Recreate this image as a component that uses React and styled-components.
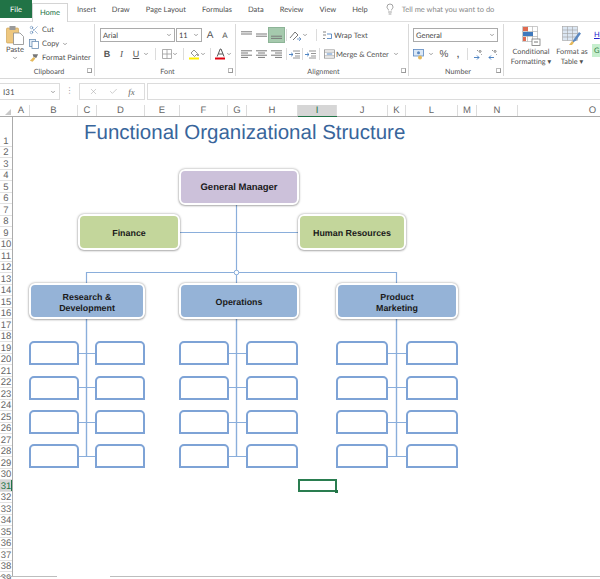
import React from 'react';
import styled, { createGlobalStyle } from 'styled-components';
import { ChevronDown, Lightbulb, X, Check, Scissors } from 'lucide-react';

const GlobalStyle = createGlobalStyle`
  html, body { margin: 0; padding: 0; background: #fff; }
  #root { width: 600px; height: 579px; overflow: hidden; }
  * { text-rendering: geometricPrecision; }
`;

const uiFont = `Lato, "Noto Sans", sans-serif`;
const sheetFont = `"Liberation Sans", Arial, sans-serif`;

const Window = styled.div`
  width: 600px;
  height: 579px;
  display: flex;
  flex-direction: column;
  overflow: hidden;
  font-family: ${uiFont};
  color: #505050;
  background: #fff;
`;

/* ---- tabs ---- */
const TabBar = styled.div`
  height: 21px;
  flex: none;
  display: flex;
  align-items: flex-end;
  font-size: 7.5px;
`;

const FileTab = styled.div`
  width: 32px;
  height: 18px;
  margin-bottom: 3px;
  background: #217346;
  color: #fff;
  display: flex;
  align-items: center;
  justify-content: center;
`;

const Tab = styled.div`
  height: 18px;
  margin-bottom: 3px;
  margin-left: ${p => p.$gap || 0}px;
  display: flex;
  align-items: center;
  white-space: nowrap;
`;

const ActiveTab = styled.div`
  width: 36px;
  height: 19px;
  margin-bottom: -1px;
  position: relative;
  box-sizing: border-box;
  display: flex;
  align-items: center;
  justify-content: center;
  padding-bottom: 2px;
  color: #217346;
  background: #fff;
  border: 1px solid #d4d4d4;
  border-bottom: none;
`;

const TellMe = styled.div`
  margin-left: 16px;
  margin-bottom: 3px;
  height: 18px;
  display: flex;
  align-items: center;
  gap: 6px;
  color: #8a8a8a;
`;

/* ---- ribbon ---- */
const Ribbon = styled.div`
  height: 58px;
  flex: none;
  display: flex;
  background: #fff;
  border-top: 1px solid #dedede;
  border-bottom: 1px solid #d8d8d8;
  box-sizing: border-box;
  font-size: 7.5px;
`;

const Group = styled.div`
  position: relative;
  width: ${p => p.$w}px;
  flex: none;
  box-sizing: border-box;
  padding: ${p => p.$pad || '0'};
  border-right: ${p => (p.$last ? 'none' : '1px solid #d9d9d9')};
  margin: 2px 0;
  display: flex;
  flex-direction: column;
`;

const GroupBody = styled.div`
  flex: 1;
  display: flex;
  gap: ${p => p.$gap || 0}px;
  min-height: 0;
`;

const GroupLabel = styled.div`
  height: 9px;
  line-height: 9px;
  text-align: center;
  font-size: 7.2px;
  color: #555;
`;

const Launcher = styled.span`
  position: absolute;
  right: 2px;
  bottom: 3px;
  width: 5px;
  height: 5px;
  border: 1px solid #9a9a9a;
  border-top-color: #bbb;
  border-left-color: #bbb;
  box-sizing: border-box;
`;

const PasteButton = styled.div`
  width: 22px;
  display: flex;
  flex-direction: column;
  align-items: center;
  line-height: 10px;
  padding-top: 2px;
`;

const ClipColumn = styled.div`
  display: flex;
  flex-direction: column;
  gap: 3px;
  margin-left: 1px;
`;

const ClipRow = styled.div`
  height: 11px;
  display: flex;
  align-items: center;
  gap: 3px;
  white-space: nowrap;
`;

const Stack = styled.div`
  display: flex;
  flex-direction: column;
  gap: ${p => p.$gap || 5}px;
  padding-top: ${p => p.$top || 4}px;
`;

const Line = styled.div`
  display: flex;
  align-items: center;
  height: 14px;
  gap: ${p => p.$gap || 0}px;
`;

const Select = styled.div`
  width: ${p => p.$w}px;
  height: 14px;
  box-sizing: border-box;
  border: 1px solid #ababab;
  display: flex;
  align-items: center;
  justify-content: space-between;
  padding: 0 2px;
  margin-right: ${p => p.$mr || 0}px;
  color: #444;
`;

const ToolGlyph = styled.span`
  width: ${p => p.$w || 14}px;
  flex: none;
  text-align: center;
  font-family: ${p => (p.$serif ? '"Liberation Serif", serif' : sheetFont)};
  font-size: ${p => p.$size || 9}px;
  font-weight: ${p => (p.$bold ? 700 : 400)};
  font-style: ${p => (p.$italic ? 'italic' : 'normal')};
  text-decoration: ${p => (p.$under ? 'underline' : 'none')};
  color: #555;
`;

const RibbonText = styled.span`
  margin-left: 1px;
  width: ${p => p.$w}px;
  flex: none;
  white-space: nowrap;
`;

const Divider = styled.span`
  width: 1px;
  height: 12px;
  background: #dcdcdc;
  margin: 0 ${p => p.$m || 3}px 0 ${p => p.$l || p.$m || 3}px;
  flex: none;
`;

const Caret = styled(ChevronDown).attrs({ size: 6, strokeWidth: 2.5 })`
  color: #666;
  flex: none;
`;

const AlignCell = styled.span`
  width: 15px;
  height: 14px;
  display: flex;
  align-items: center;
  justify-content: center;
  flex: none;
  background: ${p => (p.$on ? '#a5c9ad' : 'transparent')};
  outline: ${p => (p.$on ? '1px solid #8db497' : 'none')};
`;

const StyleButton = styled.div`
  width: ${p => p.$w}px;
  flex: none;
  display: flex;
  flex-direction: column;
  align-items: center;
  text-align: center;
  line-height: 9.5px;
  white-space: nowrap;
  font-size: 7.3px;
`;

const StyleIcon = styled.div`
  height: 21px;
  margin-top: 2px;
`;

const Gallery = styled.div`
  margin-left: 3px;
  padding-top: 4px;
  display: flex;
  flex-direction: column;
  gap: 3px;
  width: 12px;
`;

const GalleryCell = styled.div`
  height: 13px;
  padding-left: 2px;
  line-height: 13px;
  color: ${p => (p.$good ? '#2e7a3f' : '#2222cc')};
  background: ${p => (p.$good ? '#c6efce' : 'transparent')};
  text-decoration: ${p => (p.$good ? 'none' : 'underline')};
`;

/* ---- formula bar ---- */
const FormulaRow = styled.div`
  flex: none;
  height: 17px;
  margin: 4px 0 5px;
  display: flex;
  align-items: stretch;
  font-size: 8px;
`;

const NameBox = styled.div`
  width: 60px;
  box-sizing: border-box;
  border: 1px solid #dcdcdc;
  border-left: none;
  padding: 0 3px;
  display: flex;
  align-items: center;
  justify-content: space-between;
`;

const Grip = styled.div`
  width: 19px;
  text-align: center;
  line-height: 15px;
  color: #999;
`;

const FxBox = styled.div`
  width: 66px;
  box-sizing: border-box;
  border: 1px solid #dcdcdc;
  display: flex;
  align-items: center;
  justify-content: space-around;
  padding: 0 4px;
  color: #aaa;
  margin-right: 2px;
`;

const FxLabel = styled.span`
  font-family: "Liberation Serif", serif;
  font-style: italic;
  font-size: 9px;
  color: #666;
`;

const FormulaInput = styled.div`
  flex: 1;
  box-sizing: border-box;
  border: 1px solid #dcdcdc;
  border-right: none;
`;

/* ---- sheet ---- */
const Sheet = styled.div`
  flex: 1;
  min-height: 0;
  display: flex;
  flex-direction: column;
  overflow: hidden;
  font-family: ${sheetFont};
`;

const ColumnHeader = styled.div`
  flex: none;
  height: 12px;
  display: flex;
  box-sizing: border-box;
  border-bottom: 1px solid #ababab;
`;

const Corner = styled.div`
  width: 13px;
  flex: none;
  position: relative;
  &::after {
    content: '';
    position: absolute;
    right: 2px;
    bottom: 1px;
    border-style: solid;
    border-width: 0 0 6px 6px;
    border-color: transparent transparent #c8c8c8 transparent;
  }
`;

const ColCell = styled.div`
  width: ${p => p.$w}px;
  flex: none;
  box-sizing: border-box;
  text-align: center;
  font-size: 9.5px;
  line-height: 12px;
  color: ${p => (p.$active ? '#217346' : '#666')};
  border-right: 1px solid #dcdcdc;
  background: ${p => (p.$active ? '#d6d6d6' : 'transparent')};
  box-shadow: ${p => (p.$active ? '0 1px 0 #217346' : 'none')};
`;

const SheetBody = styled.div`
  flex: 1;
  min-height: 0;
  display: flex;
`;

const RowHeader = styled.div`
  width: 13px;
  flex: none;
  box-sizing: border-box;
  border-right: 1px solid #ababab;
`;

const RowCell = styled.div`
  height: ${p => p.$h}px;
  box-sizing: border-box;
  display: flex;
  align-items: flex-end;
  justify-content: center;
  font-size: 9.5px;
  line-height: 9px;
  border-bottom: 1px solid #e2e2e2;
  color: ${p => (p.$active ? '#217346' : '#666')};
  background: ${p => (p.$active ? '#d6d6d6' : 'transparent')};
  box-shadow: ${p => (p.$active ? 'inset -1px 0 0 #217346' : 'none')};
`;

const SheetTabs = styled.div`
  flex: none;
  height: 3px;
  display: flex;
  border-top: 1px solid #bdbdbd;
  box-sizing: border-box;
`;

const TabsGap = styled.div`
  width: 53px;
  height: 3px;
  margin-top: -1px;
  background: #fff;
  margin-left: 57px;
`;

/* ---- diagram canvas: items are placed by page coordinate ---- */
const ORIGIN_X = 13;
const ORIGIN_Y = 117;

const Canvas = styled.div`
  position: relative;
  flex: 1;
  overflow: hidden;
`;

const Title = styled.div`
  position: absolute;
  left: ${84 - ORIGIN_X}px;
  top: ${121 - ORIGIN_Y}px;
  font-size: 20.5px;
  line-height: 24px;
  color: #38659b;
  white-space: nowrap;
`;

const Wires = styled.svg`
  position: absolute;
  left: 0;
  top: 0;
`;

const Card = styled.div`
  position: absolute;
  left: ${p => p.$x - ORIGIN_X}px;
  top: ${p => p.$y - ORIGIN_Y}px;
  width: ${p => p.$w}px;
  height: 36px;
  box-sizing: border-box;
  padding-top: 3px;
  background: ${p => p.$fill};
  border: 2px solid #fff;
  border-radius: 6px;
  box-shadow: 0 0 2.5px rgba(0, 0, 0, 0.4), 0 1px 2px rgba(0, 0, 0, 0.2);
  display: flex;
  align-items: center;
  justify-content: center;
  text-align: center;
  font-size: ${p => p.$size || 8.9}px;
  line-height: 10.3px;
  font-weight: 700;
  color: #1a1a1a;
`;

const Slot = styled.div`
  position: absolute;
  left: ${p => p.$x - ORIGIN_X}px;
  top: ${p => p.$y - ORIGIN_Y}px;
  width: ${p => p.$w}px;
  height: 24px;
  box-sizing: border-box;
  background: #fff;
  border: 2px solid #7ea3d6;
  border-radius: 5px 5px 0 0;
`;

const SelectedCell = styled.div`
  position: absolute;
  left: ${298 - ORIGIN_X}px;
  top: ${479 - ORIGIN_Y}px;
  width: 39px;
  height: 13px;
  box-sizing: border-box;
  border: 2px solid #2a7d50;
  &::after {
    content: '';
    position: absolute;
    right: -3px;
    bottom: -3px;
    width: 3px;
    height: 3px;
    background: #217346;
  }
`;

const colWidths = [
  ['A', 17], ['B', 48], ['C', 19], ['D', 48], ['E', 35], ['F', 48], ['G', 19], ['H', 51],
  ['I', 39], ['J', 51], ['K', 18], ['L', 52], ['M', 19], ['N', 41], ['O', 150],
];

const rows = Array.from({ length: 39 }, (_, i) => i + 1);
const rowHeight = n => (n === 1 ? 29.75 : 11.5);

const slotRows = [341, 375.5, 410, 444];
const branches = [
  { trunk: 86.5, left: [29, 50], right: [95, 50] },
  { trunk: 236.5, left: [179, 50], right: [246, 52] },
  { trunk: 396.5, left: [336, 52], right: [406, 52] },
];

const Connectors = () => {
  const seg = (x1, y1, x2, y2, key, width = 1) => (
    <line
      key={key}
      x1={x1 - ORIGIN_X}
      y1={y1 - ORIGIN_Y}
      x2={x2 - ORIGIN_X}
      y2={y2 - ORIGIN_Y}
      stroke="#8aaedb"
      strokeWidth={width}
    />
  );
  return (
    <Wires width="600" height="462">
      {seg(236.5, 204, 236.5, 285, 'gm', 1.2)}
      {seg(180, 232.5, 298, 232.5, 'staff')}
      {seg(86.5, 272.5, 396.5, 272.5, 'bus', 1.2)}
      {seg(86.5, 272, 86.5, 285, 'd1', 1.2)}
      {seg(396.5, 272, 396.5, 285, 'd3', 1.2)}
      {branches.map(b => (
        <g key={b.trunk}>
          {seg(b.trunk, 318, b.trunk, 456.5, 'trunk', 1.4)}
          {slotRows.map(y =>
            seg(b.left[0] + b.left[1], Math.floor(y + 12) + 0.5, b.right[0], Math.floor(y + 12) + 0.5, y)
          )}
        </g>
      ))}
      <circle cx={236.5 - ORIGIN_X} cy={272.5 - ORIGIN_Y} r="2.3" fill="#fff" stroke="#8aaedb" />
    </Wires>
  );
};

const PasteIcon = () => (
  <svg width="18" height="19" viewBox="0 0 18 19">
    <rect x=".5" y="2" width="12" height="15" rx="1" fill="#eec77f" stroke="#c99a48" strokeWidth=".6" />
    <rect x="3.500" y="0" width="6" height="4" fill="#9a9a9a" />
    <path d="M7.500 7h6.500l3.500 3.500V18.500H7.500z" fill="#fff" stroke="#8a8a8a" strokeWidth=".8" />
  </svg>
);

const CopyIcon = () => (
  <svg width="10" height="10" viewBox="0 0 10 10">
    <rect x=".5" y=".5" width="6" height="7" fill="#e4eef8" stroke="#6d8fb5" strokeWidth=".8" />
    <rect x="3" y="2.500" width="6.500" height="7" fill="#fff" stroke="#6d8fb5" strokeWidth=".8" />
  </svg>
);

const BrushIcon = () => (
  <svg width="10" height="10" viewBox="0 0 11 10">
    <path d="M4 1l6 0-2 4-3-1z" fill="#777" />
    <path d="M1 8l4-4 2 1.500-3 3.500z" fill="#e5b95c" />
  </svg>
);

const Bars = ({ widths }) => (
  <svg width="11" height="9" viewBox="0 0 11 9">
    {widths.map((w, i) => (
      <rect key={i} x={w[0]} y={i * 2.2 + 0.3} width={w[1]} height="1" fill="#7a7a7a" />
    ))}
  </svg>
);

const BorderIcon = () => (
  <svg width="10" height="10" viewBox="0 0 10 10">
    <path d="M.5.5h9v9h-9zM5 .5v9M.5 5h9" fill="none" stroke="#9a9a9a" strokeWidth=".8" />
  </svg>
);

const FillIcon = () => (
  <svg width="11" height="12" viewBox="0 0 11 12">
    <path d="M2 5l3-3 3.500 3.500-3 3z" fill="#fff" stroke="#777" strokeWidth=".8" />
    <circle cx="9" cy="7" r="1" fill="#888" />
    <rect y="9.500" width="10" height="2" fill="#ffef00" />
  </svg>
);

const FontColorIcon = () => (
  <svg width="11" height="12" viewBox="0 0 11 12">
    <path d="M2.200 8.500L5.200 1h.8l3 7.500M3.400 6h4.400" fill="none" stroke="#555" strokeWidth="1" />
    <rect y="9.500" width="10" height="2" fill="#e0000f" />
  </svg>
);

const OrientationIcon = () => (
  <svg width="13" height="11" viewBox="0 0 13 11">
    <path d="M1 8l5-6 3 3-5 5" fill="none" stroke="#777" strokeWidth="1" />
    <path d="M8 9h4M10 7l2 2-2 2" fill="none" stroke="#5b88c0" strokeWidth=".8" />
  </svg>
);

const IndentIcon = () => (
  <svg width="11" height="9" viewBox="0 0 11 9">
    <path d="M4 1h7M6 3.500h5M6 6h5M4 8h7" stroke="#7a7a7a" strokeWidth=".8" />
    <path d="M0 4.500h4M2.200 2.800L4 4.500 2.200 6.200" fill="none" stroke="#3f79bd" strokeWidth=".9" />
  </svg>
);

const WrapIcon = () => (
  <svg width="11" height="11" viewBox="0 0 11 11">
    <path d="M1 2h3M1 5h3M1 8.500h2" stroke="#777" strokeWidth=".9" />
    <path d="M5 8.500h4.500V4H5" fill="none" stroke="#3f79bd" strokeWidth=".8" />
  </svg>
);

const MergeIcon = () => (
  <svg width="11" height="10" viewBox="0 0 12 10">
    <rect x=".5" y=".5" width="11" height="9" fill="#fff" stroke="#8a8a8a" strokeWidth=".8" />
    <path d="M.5 3h11M.5 7h11" stroke="#8a8a8a" strokeWidth=".7" />
    <path d="M3 5h6" stroke="#3f79bd" strokeWidth="1" />
  </svg>
);

const AccountingIcon = () => (
  <svg width="12" height="11" viewBox="0 0 12 11">
    <rect x=".5" y=".5" width="10" height="6.500" fill="#dbe8f6" stroke="#5b88c0" strokeWidth=".8" />
    <circle cx="5.500" cy="3.700" r="1.500" fill="#5b88c0" />
    <circle cx="7" cy="8.500" r="2" fill="#e5b95c" />
  </svg>
);

const DecimalIcon = ({ flip }) => (
  <svg width="12" height="11" viewBox="0 0 12 11">
    <path d={flip ? 'M6 8.500H1M3 6.500L1 8.500l2 2' : 'M1 8.500h5M4 6.500l2 2-2 2'} fill="none" stroke="#3f79bd" strokeWidth=".9" />
    <path d="M4 1.500h1M7 1.500a1 1 0 1 0 .1 0zM8 5.500h.8" fill="none" stroke="#777" strokeWidth=".8" />
  </svg>
);

const ConditionalIcon = () => (
  <svg width="19" height="20" viewBox="0 0 19 20">
    <path d="M.5.500h15v15H.5zM.5 5.500h15M.5 10.500h15M5.500.500v15M10.500.500v15" fill="#fff" stroke="#a8a8a8" strokeWidth=".6" />
    <rect x="1" y="1" width="5" height="4" fill="#e06a50" />
    <rect x="1" y="6" width="10" height="4" fill="#3f79bd" />
    <rect x="1" y="11" width="3" height="4" fill="#e06a50" />
    <rect x="10" y="13" width="8" height="6.500" fill="#fff" stroke="#7a7a7a" strokeWidth=".8" />
    <path d="M12 16h4" stroke="#555" strokeWidth=".8" />
  </svg>
);

const TableIcon = () => (
  <svg width="20" height="20" viewBox="0 0 20 20">
    <rect x=".5" y=".5" width="15" height="14" fill="#dbe6f2" stroke="#a0a0a0" strokeWidth=".6" />
    <path d="M.5 4h15M.5 7.500h15M.5 11h15M5.500.500v14M10.500.500v14" stroke="#a0a0a0" strokeWidth=".6" />
    <path d="M9 18l3-5 5-7 2 1.500-5 7z" fill="#5b88c0" />
    <path d="M7 19l3-4 2 1.500-2 2.500z" fill="#e5b95c" />
  </svg>
);

export default function App() {
  return (
    <Window>
      <GlobalStyle />
      <TabBar>
        <FileTab>File</FileTab>
        <ActiveTab>Home</ActiveTab>
        <Tab $gap={9}>Insert</Tab>
        <Tab $gap={16}>Draw</Tab>
        <Tab $gap={16}>Page Layout</Tab>
        <Tab $gap={16}>Formulas</Tab>
        <Tab $gap={16}>Data</Tab>
        <Tab $gap={16}>Review</Tab>
        <Tab $gap={16}>View</Tab>
        <Tab $gap={16}>Help</Tab>
        <TellMe>
          <Lightbulb size={12} strokeWidth={1.2} color="#666" />
          Tell me what you want to do
        </TellMe>
      </TabBar>

      <Ribbon>
        <Group $w={95} $pad="0 0 0 4px">
          <GroupBody $gap={2}>
            <PasteButton>
              <PasteIcon />
              Paste
              <Caret />
            </PasteButton>
            <ClipColumn>
              <ClipRow>
                <Scissors size={10} strokeWidth={1.2} color="#4a78ad" />
                Cut
              </ClipRow>
              <ClipRow>
                <CopyIcon />
                Copy
                <Caret />
              </ClipRow>
              <ClipRow>
                <BrushIcon />
                Format Painter
              </ClipRow>
            </ClipColumn>
          </GroupBody>
          <GroupLabel>Clipboard</GroupLabel>
          <Launcher />
        </Group>

        <Group $w={141} $pad="0 0 0 5px">
          <GroupBody>
            <Stack>
              <Line>
                <Select $w={75} $mr={1}>
                  Arial
                  <Caret />
                </Select>
                <Select $w={26}>
                  11
                  <Caret />
                </Select>
                <ToolGlyph $w={16} $size={10}>A</ToolGlyph>
                <ToolGlyph $w={14} $size={8}>A</ToolGlyph>
              </Line>
              <Line>
                <ToolGlyph $w={14} $bold>B</ToolGlyph>
                <ToolGlyph $w={15} $italic $serif>I</ToolGlyph>
                <ToolGlyph $w={14} $under>U</ToolGlyph>
                <Caret />
                <Divider $m={6} />
                <BorderIcon />
                <Caret />
                <Divider $m={5} />
                <FillIcon />
                <Caret />
                <Divider $m={4} />
                <FontColorIcon />
                <Caret />
              </Line>
            </Stack>
          </GroupBody>
          <GroupLabel>Font</GroupLabel>
          <Launcher />
        </Group>

        <Group $w={173} $pad="0 0 0 3px">
          <GroupBody>
            <Stack $top={4} $gap={5}>
              <Line>
                <AlignCell><Bars widths={[[0, 11], [0, 11]]} /></AlignCell>
                <AlignCell><Bars widths={[[0, 0], [0, 11], [0, 11]]} /></AlignCell>
                <AlignCell $on><Bars widths={[[0, 0], [0, 0], [0, 11], [0, 11]]} /></AlignCell>
                <Divider $m={2} />
                <OrientationIcon />
                <Caret />
                <Divider $m={5} $l={8} />
                <WrapIcon />
                <RibbonText $w={40}>Wrap Text</RibbonText>
              </Line>
              <Line>
                <AlignCell><Bars widths={[[0, 11], [0, 7], [0, 11], [0, 7]]} /></AlignCell>
                <AlignCell><Bars widths={[[0, 11], [2, 7], [0, 11], [2, 7]]} /></AlignCell>
                <AlignCell><Bars widths={[[0, 11], [4, 7], [0, 11], [4, 7]]} /></AlignCell>
                <Divider $m={2} />
                <IndentIcon />
                <Divider $m={2} />
                <IndentIcon />
                <Divider $m={4} $l={3} />
                <MergeIcon />
                <RibbonText $w={57}>Merge &amp; Center</RibbonText>
                <Caret />
              </Line>
            </Stack>
          </GroupBody>
          <GroupLabel>Alignment</GroupLabel>
          <Launcher />
        </Group>

        <Group $w={95} $pad="0 0 0 4px">
          <GroupBody>
            <Stack>
              <Line>
                <Select $w={85}>
                  General
                  <Caret />
                </Select>
              </Line>
              <Line $gap={3}>
                <AccountingIcon />
                <Caret />
                <ToolGlyph $w={14} $size={10}>%</ToolGlyph>
                <ToolGlyph $w={8} $bold>,</ToolGlyph>
                <Divider $m={2} />
                <DecimalIcon />
                <DecimalIcon flip />
              </Line>
            </Stack>
          </GroupBody>
          <GroupLabel>Number</GroupLabel>
          <Launcher />
        </Group>

        <Group $w={96} $last $pad="0 0 0 3px">
          <GroupBody>
            <StyleButton $w={48}>
              <StyleIcon><ConditionalIcon /></StyleIcon>
              Conditional
              <span>Formatting ▾</span>
            </StyleButton>
            <StyleButton $w={34}>
              <StyleIcon><TableIcon /></StyleIcon>
              Format as
              <span>Table ▾</span>
            </StyleButton>
            <Gallery>
              <GalleryCell>H</GalleryCell>
              <GalleryCell $good>G</GalleryCell>
            </Gallery>
          </GroupBody>
        </Group>
      </Ribbon>

      <FormulaRow>
        <NameBox>
          I31
          <Caret />
        </NameBox>
        <Grip>⋮</Grip>
        <FxBox>
          <X size={9} strokeWidth={1.5} />
          <Check size={9} strokeWidth={1.5} />
          <FxLabel>fx</FxLabel>
        </FxBox>
        <FormulaInput />
      </FormulaRow>

      <Sheet>
        <ColumnHeader>
          <Corner />
          {colWidths.map(([name, w]) => (
            <ColCell key={name} $w={w} $active={name === 'I'}>{name}</ColCell>
          ))}
        </ColumnHeader>
        <SheetBody>
          <RowHeader>
            {rows.map(n => (
              <RowCell key={n} $h={rowHeight(n)} $active={n === 31}>{n}</RowCell>
            ))}
          </RowHeader>
          <Canvas>
            <Title>Functional Organizational Structure</Title>
            <Connectors />
            <Card $x={179} $y={169} $w={120} $size={9.5} $fill="#ccc1da">General Manager</Card>
            <Card $x={78} $y={214} $w={102} $fill="#c3d69b">Finance</Card>
            <Card $x={298} $y={214} $w={108} $fill="#c3d69b">Human Resources</Card>
            <Card $x={29} $y={283} $w={116} $fill="#95b3d7">Research &amp;<br />Development</Card>
            <Card $x={179} $y={283} $w={120} $fill="#95b3d7">Operations</Card>
            <Card $x={336} $y={283} $w={122} $fill="#95b3d7">Product<br />Marketing</Card>
            {branches.map(b =>
              slotRows.map(y => (
                <React.Fragment key={`${b.trunk}-${y}`}>
                  <Slot $x={b.left[0]} $y={y} $w={b.left[1]} />
                  <Slot $x={b.right[0]} $y={y} $w={b.right[1]} />
                </React.Fragment>
              ))
            )}
            <SelectedCell />
          </Canvas>
        </SheetBody>
        <SheetTabs>
          <TabsGap />
        </SheetTabs>
      </Sheet>
    </Window>
  );
}
